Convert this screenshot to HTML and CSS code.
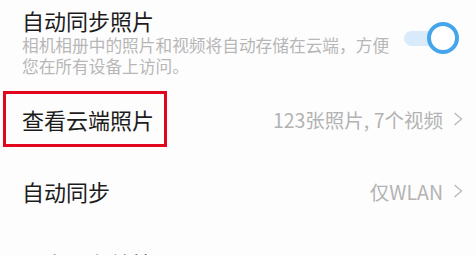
FILE: index.html
```html
<!DOCTYPE html>
<html lang="zh-CN">
<head>
    <meta charset="UTF-8">
    <meta name="viewport" content="width=device-width, initial-scale=1.0">
    <title>云空间 - 图库</title>
    <link rel="stylesheet" href="styles.css">
</head>
<body>
    <div class="settings-list">
        <div class="setting-row first-row">
            <div class="setting-text">
                <div class="setting-title">自动同步照片</div>
                <div class="setting-desc">相机相册中的照片和视频将自动存储在云端，方便您在所有设备上访问。</div>
            </div>
            <div class="toggle on">
                <span class="toggle-track"></span>
                <span class="toggle-knob"></span>
            </div>
        </div>

        <div class="setting-row">
            <span class="setting-title highlight">查看云端照片</span>
            <div class="setting-value">
                <span>123张照片, 7个视频</span>
                <svg class="chevron" viewBox="0 0 10 14" width="10" height="14">
                    <polyline points="1.5,1 8.5,7 1.5,13" fill="none" stroke="#bdbdbd" stroke-width="1.4"/>
                </svg>
            </div>
        </div>

        <div class="setting-row">
            <span class="setting-title">自动同步</span>
            <div class="setting-value">
                <span>仅WLAN</span>
                <svg class="chevron" viewBox="0 0 10 14" width="10" height="14">
                    <polyline points="1.5,1 8.5,7 1.5,13" fill="none" stroke="#bdbdbd" stroke-width="1.4"/>
                </svg>
            </div>
        </div>

        <div class="setting-row">
            <span class="setting-title">云空间存储管理</span>
            <div class="setting-value">
                <svg class="chevron" viewBox="0 0 10 14" width="10" height="14">
                    <polyline points="1.5,1 8.5,7 1.5,13" fill="none" stroke="#bdbdbd" stroke-width="1.4"/>
                </svg>
            </div>
        </div>
    </div>
</body>
</html>
```

FILE: styles.css
```css
body {
    margin: 0;
    background-color: #fdfdfd;
    font-family: "Noto Sans CJK SC", "Noto Sans", sans-serif;
    color: #1c1c1c;
    overflow: hidden;
}

.settings-list {
    padding: 0 13px 0 22px;
}

.setting-row {
    display: flex;
    align-items: center;
    justify-content: space-between;
    height: 72px;
}

.first-row {
    height: auto;
    padding: 5px 0 6px;
}

.setting-title {
    font-size: 22px;
    line-height: 30px;
}

.setting-desc {
    width: 375px;
    font-size: 16.7px;
    line-height: 21px;
    color: #b7b7b7;
}

.highlight {
    display: inline-block;
    padding: 10px 10px 10px 16px;
    margin: -13px -13px -13px -19px;
    border: 3px solid #e1061d;
}

.setting-value {
    display: flex;
    align-items: center;
    gap: 10px;
    font-size: 19.5px;
    color: #b3b3b3;
}

.chevron {
    display: block;
}

.toggle {
    position: relative;
    width: 55px;
    height: 32px;
    margin-right: 4px;
    margin-top: -6px;
}

.toggle-track {
    position: absolute;
    left: 0;
    right: 14px;
    top: 9px;
    height: 15px;
    border-radius: 8px;
    background-color: #d9ebfa;
}

.toggle-knob {
    position: absolute;
    right: 0;
    top: 0;
    width: 24px;
    height: 24px;
    border: 4px solid #45a5ec;
    border-radius: 50%;
    background-color: #fff;
}
```
